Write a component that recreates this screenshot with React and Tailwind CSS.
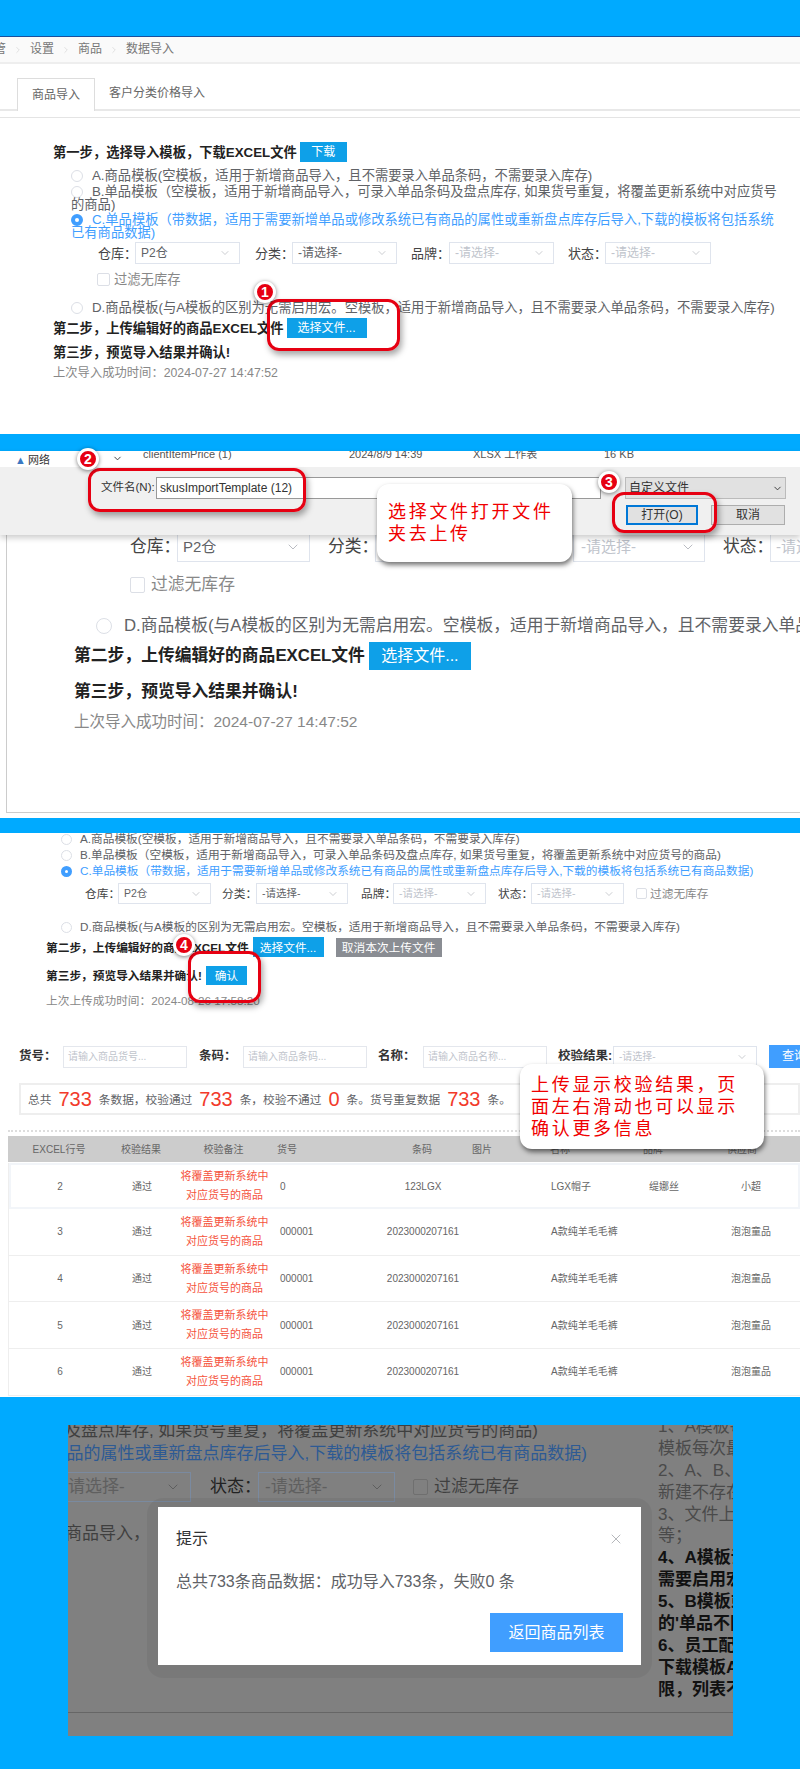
import { ChevronDown, ChevronRight, X } from "lucide-react"

const FONT = "font-['Liberation_Sans','Noto_Sans_CJK_SC',sans-serif]"

function Radio({ checked, className = "" }) {
    return (
        <span
            className={`inline-block shrink-0 rounded-full align-[-2px] bg-white ${className} ${checked ? "border-[4px] border-[#409eff]" : "border border-[#dcdfe6]"}`}
        />
    )
}

function Select({ text, muted, className = "", chevron = 12 }) {
    return (
        <div className={`flex items-center justify-between shrink-0 whitespace-nowrap border border-[#dfe4ed] bg-white pl-[5px] pr-[8px] ${className}`}>
            <span className={muted ? "text-[#c0c4cc]" : "text-[#606266]"}>{text}</span>
            <ChevronDown size={chevron} strokeWidth={1.2} className="text-[#a8abb2]" />
        </div>
    )
}

function Label({ children, className = "" }) {
    return <span className={`shrink-0 whitespace-nowrap ${className}`}>{children}</span>
}

function Badge({ n, className }) {
    return (
        <div className={`absolute z-30 flex h-[22px] w-[22px] items-center justify-center rounded-full border-[3px] border-white bg-[#e60012] text-[14px] font-bold text-white shadow-[0_1px_4px_rgba(0,0,0,0.5)] ${className}`}>
            {n}
        </div>
    )
}

function RedBox({ className }) {
    return <div className={`absolute z-20 rounded-[12px] border-[3px] border-[#e60012] shadow-[2px_4px_6px_rgba(0,0,0,0.35)] ${className}`} />
}

function Callout({ lines, className }) {
    return (
        <div className={`absolute z-20 rounded-[12px] bg-white pl-[11px] shadow-[1px_3px_5px_rgba(0,0,0,0.55)] ${className}`}>
            {lines.map((line) => (
                <div key={line} className="h-[22px] whitespace-nowrap text-[18px] leading-[22px] tracking-[2.7px] text-[#f00000]">
                    {line}
                </div>
            ))}
        </div>
    )
}

function BlueButton({ children, className = "" }) {
    return <div className={`flex shrink-0 items-center justify-center bg-[#0ea0e8] text-white ${className}`}>{children}</div>
}

function PanelOne() {
    return (
        <section className="relative h-[398px] bg-white text-[13.3px] leading-[13px] text-[#606266]">
            <div className="flex h-[28px] items-center gap-[7px] border-t border-b-2 border-t-[#1a4f9c] border-b-[#eeeeee] bg-[#fafafa] text-[12px] text-[#777]">
                <span className="-ml-[6px]">管</span>
                <ChevronRight size={10} strokeWidth={1} className="text-[#bbb]" />
                <span>设置</span>
                <ChevronRight size={10} strokeWidth={1} className="text-[#bbb]" />
                <span>商品</span>
                <ChevronRight size={10} strokeWidth={1} className="text-[#bbb]" />
                <span>数据导入</span>
            </div>
            <div className="flex h-[47px] items-end border-b-2 border-[#e8e8e8] pl-[17px] text-[12px] text-[#666]">
                <div className="-mb-[2px] flex h-[33px] w-[78px] items-center justify-center border border-b-0 border-[#dddddd] bg-white">商品导入</div>
                <div className="flex h-[31px] items-center pl-[14px]">客户分类价格导入</div>
            </div>
            <div className="mt-[6px] border-t border-[#e4e4e4] pl-[53px]">
                <div className="mt-[24px] flex h-[20px] items-center gap-[3px] font-bold text-[#222]">
                    第一步，选择导入模板，下载EXCEL文件
                    <BlueButton className="h-[20px] w-[47px] text-[12px] font-normal">下载</BlueButton>
                </div>
                <div className="ml-[18px] mt-[7px] whitespace-nowrap">
                    <div><Radio className="mr-[9px] h-[12px] w-[12px]" />A.商品模板(空模板，适用于新增商品导入，且不需要录入单品条码，不需要录入库存)</div>
                    <div className="mt-[3px]"><Radio className="mr-[9px] h-[12px] w-[12px]" />B.单品模板（空模板，适用于新增商品导入，可录入单品条码及盘点库存, 如果货号重复，将覆盖更新系统中对应货号<br />的商品)</div>
                    <div className="mt-[2px] text-[#409eff]"><Radio checked className="mr-[9px] h-[12px] w-[12px]" />C.单品模板（带数据，适用于需要新增单品或修改系统已有商品的属性或重新盘点库存后导入,下载的模板将包括系统<br />已有商品数据)</div>
                </div>
                <div className="ml-[45px] mt-[3px] flex h-[22px] items-center text-[13px] text-[#444]">
                    <Label className="w-[37px]">仓库：</Label>
                    <Select text="P2仓" className="h-[22px] w-[105px] text-[12px]" />
                    <Label className="ml-[15px] w-[37px]">分类：</Label>
                    <Select text="-请选择-" className="h-[22px] w-[105px] text-[12px]" />
                    <Label className="ml-[14px] w-[38px]">品牌：</Label>
                    <Select text="-请选择-" muted className="h-[22px] w-[105px] text-[12px]" />
                    <Label className="ml-[14px] w-[37px]">状态：</Label>
                    <Select text="-请选择-" muted className="h-[22px] w-[106px] text-[12px]" />
                </div>
                <div className="ml-[44px] mt-[7px] flex h-[16px] items-center gap-[4px] text-[#888]">
                    <span className="h-[13px] w-[13px] rounded-[2px] border border-[#dcdfe6]" />
                    过滤无库存
                </div>
                <div className="ml-[18px] mt-[14px] whitespace-nowrap">
                    <Radio className="mr-[9px] h-[12px] w-[12px]" />D.商品模板(与A模板的区别为无需启用宏。空模板，适用于新增商品导入，且不需要录入单品条码，不需要录入库存)
                </div>
                <div className="mt-[4px] flex h-[20px] items-center gap-[3px] font-bold text-[#222]">
                    第二步，上传编辑好的商品EXCEL文件
                    <BlueButton className="h-[20px] w-[80px] text-[12px] font-normal">选择文件...</BlueButton>
                </div>
                <div className="mt-[8px] h-[14px] font-bold text-[#222]">第三步，预览导入结果并确认!</div>
                <div className="mt-[7px] text-[12.3px] text-[#888]">上次导入成功时间：2024-07-27 14:47:52</div>
            </div>
            <Badge n="1" className="left-[254px] top-[245px]" />
            <RedBox className="left-[267px] top-[263px] h-[52px] w-[133px]" />
        </section>
    )
}

function PanelTwo() {
    return (
        <section className="relative h-[367px] bg-white text-[16.8px] text-[#606266]">
            <div className="absolute inset-x-0 top-0 z-10 h-[84px] overflow-hidden bg-[#f0f0f0] text-[12px] text-[#333] shadow-[0_3px_6px_rgba(0,0,0,0.2)]">
                <div className="flex h-[16px] bg-white">
                    <div className="flex w-[125px] items-end justify-between pb-[1px] pl-[15px] pr-[2px]">
                        <span className="text-[11px] leading-[12px]"><span className="mr-[2px] text-[#3a78c2]">▲</span>网络</span>
                        <ChevronDown size={11} className="mb-[2px]" />
                    </div>
                    <div className="flex flex-1 items-start pl-[18px] text-[11px] leading-[6px] text-[#555]">
                        <span className="w-[206px]">clientItemPrice (1)</span>
                        <span className="w-[124px]">2024/8/9 14:39</span>
                        <span className="w-[131px]">XLSX 工作表</span>
                        <span>16 KB</span>
                    </div>
                </div>
                <div className="ml-[101px] mt-[10px] flex h-[22px] items-center text-[12px]">
                    <Label className="w-[55px] text-[11.5px]">文件名(N):</Label>
                    <div className="flex h-[22px] w-[445px] items-center border border-[#999] bg-white pl-[3px]">skusImportTemplate (12)</div>
                    <div className="ml-[24px] flex h-[22px] w-[161px] items-center justify-between border border-[#bbb] bg-[#e1e1e1] pl-[3px] pr-[2px]">
                        自定义文件
                        <ChevronDown size={11} />
                    </div>
                </div>
                <div className="ml-[626px] mt-[6px] flex gap-[13px] text-[12px]">
                    <div className="flex h-[20px] w-[72px] items-center justify-center border-2 border-[#0078d7] bg-[#e1e1e1]">打开(O)</div>
                    <div className="flex h-[20px] w-[74px] items-center justify-center border border-[#adadad] bg-[#e1e1e1]">取消</div>
                </div>
            </div>

            <div className="h-[81px]" />
            <div className="ml-[130px] flex h-[30px] items-center whitespace-nowrap text-[#444]">
                <Label className="w-[47px]">仓库：</Label>
                <Select text="P2仓" chevron={16} className="h-[30px] w-[133px] text-[15px]" />
                <Label className="ml-[18px] w-[47px]">分类：</Label>
                <Select text="" className="h-[30px] w-[133px]" />
                <Label className="ml-[18px] w-[47px]">品牌：</Label>
                <Select text="-请选择-" muted chevron={16} className="h-[30px] w-[132px] pl-[7px] text-[15px]" />
                <Label className="ml-[18px] w-[47px]">状态：</Label>
                <Select text="-请选择-" muted className="h-[30px] w-[133px] text-[15px]" />
            </div>
            <div className="ml-[130px] mt-[15px] flex h-[16px] items-center gap-[6px] text-[#888]">
                <span className="h-[16px] w-[15px] rounded-[2px] border border-[#dcdfe6]" />
                过滤无库存
            </div>
            <div className="ml-[96px] mt-[22px] flex h-[22px] items-center whitespace-nowrap">
                <Radio className="mr-[12px] h-[16px] w-[16px]" />D.商品模板(与A模板的区别为无需启用宏。空模板，适用于新增商品导入，且不需要录入单品条码，不需要录入库存)
            </div>
            <div className="ml-[74px] mt-[5px] flex h-[28px] items-center gap-[4px] font-bold text-[#222]">
                第二步，上传编辑好的商品EXCEL文件
                <BlueButton className="h-[28px] w-[102px] text-[16px] font-normal">选择文件...</BlueButton>
            </div>
            <div className="ml-[74px] mt-[11px] h-[22px] font-bold leading-[22px] text-[#222]">第三步，预览导入结果并确认!</div>
            <div className="ml-[74px] mt-[8px] text-[15.5px] leading-[22px] text-[#888]">上次导入成功时间：2024-07-27 14:47:52</div>
            <div className="absolute bottom-[5px] left-[6px] right-0 top-[84px] border-b border-l border-[#cccccc]" />

            <Badge n="2" className="left-[77px] top-[-3px]" />
            <Badge n="3" className="left-[598px] top-[20px]" />
            <RedBox className="left-[88px] top-[17px] h-[44px] w-[218px]" />
            <RedBox className="left-[612px] top-[41px] h-[41px] w-[105px]" />
            <Callout lines={["选择文件打开文件", "夹去上传"]} className="left-[377px] top-[33px] h-[78px] w-[195px] pt-[17px]" />
        </section>
    )
}

const rows = [
    { no: 2, sku: "0", code: "123LGX", name: "LGX帽子", brand: "缇娜丝", supplier: "小超" },
    { no: 3, sku: "000001", code: "2023000207161", name: "A款纯羊毛毛裤", brand: "", supplier: "泡泡童品" },
    { no: 4, sku: "000001", code: "2023000207161", name: "A款纯羊毛毛裤", brand: "", supplier: "泡泡童品" },
    { no: 5, sku: "000001", code: "2023000207161", name: "A款纯羊毛毛裤", brand: "", supplier: "泡泡童品" },
    { no: 6, sku: "000001", code: "2023000207161", name: "A款纯羊毛毛裤", brand: "", supplier: "泡泡童品" },
]

function Num({ children }) {
    return <span className="mx-[7px] text-[20px] text-[#f23a2a]">{children}</span>
}

function PanelThree() {
    const grid = "grid grid-cols-[102px_62px_103px_100px_94px_81px_90px_60px_100px] items-center"
    return (
        <section className="relative h-[564px] bg-white text-[11.7px] leading-[13px] text-[#606266]">
            <div className="ml-[61px] -mt-[1px] whitespace-nowrap">
                <div><Radio className="mr-[8px] h-[11px] w-[11px]" />A.商品模板(空模板，适用于新增商品导入，且不需要录入单品条码，不需要录入库存)</div>
                <div className="mt-[3px]"><Radio className="mr-[8px] h-[11px] w-[11px]" />B.单品模板（空模板，适用于新增商品导入，可录入单品条码及盘点库存, 如果货号重复，将覆盖更新系统中对应货号的商品)</div>
                <div className="mt-[3px] text-[#409eff]"><Radio checked className="mr-[8px] h-[11px] w-[11px]" />C.单品模板（带数据，适用于需要新增单品或修改系统已有商品的属性或重新盘点库存后导入,下载的模板将包括系统已有商品数据)</div>
            </div>
            <div className="ml-[85px] mt-[6px] flex h-[21px] items-center text-[#444]">
                <Label className="w-[33px]">仓库：</Label>
                <Select text="P2仓" className="h-[21px] w-[93px] text-[10.5px]" />
                <Label className="ml-[11px] w-[34px]">分类：</Label>
                <Select text="-请选择-" className="h-[21px] w-[92px] text-[10.5px]" />
                <Label className="ml-[13px] w-[32px]">品牌：</Label>
                <Select text="-请选择-" muted className="h-[21px] w-[93px] text-[10.5px]" />
                <Label className="ml-[12px] w-[33px]">状态：</Label>
                <Select text="-请选择-" muted className="h-[21px] w-[93px] text-[10.5px]" />
                <span className="ml-[12px] h-[11px] w-[11px] rounded-[2px] border border-[#dcdfe6]" />
                <span className="ml-[3px] text-[#888]">过滤无库存</span>
            </div>
            <div className="ml-[61px] mt-[16px] whitespace-nowrap">
                <Radio className="mr-[8px] h-[11px] w-[11px]" />D.商品模板(与A模板的区别为无需启用宏。空模板，适用于新增商品导入，且不需要录入单品条码，不需要录入库存)
            </div>
            <div className="ml-[46px] mt-[4px] flex h-[20px] items-center font-bold text-[#222]">
                第二步，上传编辑好的商品EXCEL文件
                <BlueButton className="ml-[4px] h-[20px] w-[71px] text-[11.7px] font-normal">选择文件...</BlueButton>
                <div className="ml-[12px] flex h-[19px] w-[106px] items-center justify-center bg-[#8a8d93] font-normal text-white">取消本次上传文件</div>
            </div>
            <div className="ml-[46px] mt-[9px] flex h-[19px] items-center gap-[4px] font-bold text-[#222]">
                第三步，预览导入结果并确认!
                <BlueButton className="h-[19px] w-[41px] text-[11.7px] font-normal">确认</BlueButton>
            </div>
            <div className="ml-[46px] mt-[9px] text-[#888]">上次上传成功时间：2024-08-26 17:58:20</div>

            <div className="ml-[19px] mt-[38px] flex h-[23px] items-center whitespace-nowrap text-[12.5px] font-bold text-[#333]">
                <Label className="w-[44px]">货号：</Label>
                <div className="flex h-[22px] w-[124px] shrink-0 items-center border border-[#e4e7ed] pl-[4px] text-[10px] font-normal text-[#c0c4cc]">请输入商品货号...</div>
                <Label className="ml-[12px] w-[44px]">条码：</Label>
                <div className="flex h-[22px] w-[124px] shrink-0 items-center border border-[#e4e7ed] pl-[4px] text-[10px] font-normal text-[#c0c4cc]">请输入商品条码...</div>
                <Label className="ml-[11px] w-[45px]">名称：</Label>
                <div className="flex h-[22px] w-[124px] shrink-0 items-center border border-[#e4e7ed] pl-[4px] text-[10px] font-normal text-[#c0c4cc]">请输入商品名称...</div>
                <Label className="ml-[11px] w-[55px]">校验结果:</Label>
                <Select text="-请选择-" muted className="h-[22px] w-[144px] text-[10px] font-normal" />
                <div className="ml-[12px] flex h-[23px] w-[60px] shrink-0 items-center bg-[#409eff] pl-[13px] text-[12px] font-normal text-white">查询</div>
            </div>
            <div className="ml-[19px] mt-[15px] flex h-[32px] items-center whitespace-nowrap border-2 border-[#eeeeee] pl-[7px]">
                总共<Num>733</Num>条数据，校验通过<Num>733</Num>条，校验不通过<Num>0</Num>条。货号重复数据<Num>733</Num>条。
            </div>
            <div className="ml-[8px] mt-[15px] border-t-2 border-dotted border-[#dddddd]" />
            <div className={`${grid} ml-[8px] mt-[4px] h-[26px] bg-[#cccccc] text-[10px] text-[#666]`}>
                <span className="text-center">EXCEL行号</span>
                <span className="text-center">校验结果</span>
                <span className="text-center">校验备注</span>
                <span className="pl-[2px]">货号</span>
                <span className="text-center">条码</span>
                <span className="pl-[3px]">图片</span>
                <span>名称</span>
                <span className="pl-[3px]">品牌</span>
                <span className="pl-[27px]">供应商</span>
            </div>
            <div className="ml-[8px] border-l border-[#eeeeee] text-[10px] text-[#666]">
                {rows.map((row) => (
                    <div key={row.no} className={`${grid} ${row.no === 2 ? "mt-[1px] h-[46px] shadow-[inset_0_0_0_2px_#f2f5f9]" : "h-[46.7px] border-b border-[#eeeeee]"}`}>
                        <span className="text-center">{row.no}</span>
                        <span className="text-center">通过</span>
                        <span className="text-center text-[11px] leading-[19px] text-[#f5533d]">将覆盖更新系统中<br />对应货号的商品</span>
                        <span className="pl-[4px]">{row.sku}</span>
                        <span className="text-center">{row.code}</span>
                        <span />
                        <span>{row.name}</span>
                        <span className="pl-[8px]">{row.brand}</span>
                        <span className="text-center">{row.supplier}</span>
                    </div>
                ))}
            </div>
            <Badge n="4" className="left-[173px] top-[101px]" />
            <RedBox className="left-[188px] top-[118px] h-[52px] w-[73px]" />
            <Callout lines={["上传显示校验结果，页", "面左右滑动也可以显示", "确认更多信息"]} className="left-[520px] top-[231px] h-[85px] w-[244px] pt-[10px]" />
        </section>
    )
}

function PanelFour() {
    const sideLines = [
        { t: "1、A模板每", b: false },
        { t: "模板每次最", b: false },
        { t: "2、A、B、", b: false },
        { t: "新建不存在", b: false },
        { t: "3、文件上传", b: false },
        { t: "等；", b: false },
        { t: "4、A模板请", b: true },
        { t: "需要启用宏", b: true },
        { t: "5、B模板或", b: true },
        { t: "的'单品不同", b: true },
        { t: "6、员工配置", b: true },
        { t: "下载模板A", b: true },
        { t: "限，列表不", b: true },
    ]
    return (
        <section className="h-[372px] bg-[#00aaff] pt-[28px]">
            <div className="relative ml-[68px] h-[311px] w-[665px] overflow-hidden bg-[#808080] text-[17px] leading-[22px] text-[#3f3f3f]">
                <div className="flex h-[287px] overflow-hidden">
                    <div className="w-[590px] shrink-0 overflow-hidden">
                        <div className="-mt-[5px] flex w-[470px] justify-end whitespace-nowrap">及盘点库存, 如果货号重复，将覆盖更新系统中对应货号的商品)</div>
                        <div className="mt-[1px] flex w-[519px] justify-end whitespace-nowrap text-[#2d5a94]">品的属性或重新盘点库存后导入,下载的模板将包括系统已有商品数据)</div>
                        <div className="mt-[7px] flex h-[30px] items-center">
                            <div className="flex h-[30px] w-[123px] shrink-0 items-center justify-between border-y border-r border-[#7a8aa0] pr-[9px] text-[#5f5f5f]">
                                <span className="whitespace-nowrap">请选择-</span>
                                <ChevronDown size={16} strokeWidth={1.2} className="text-[#555]" />
                            </div>
                            <Label className="ml-[19px] w-[48px] text-[#222]">状态：</Label>
                            <div className="flex h-[30px] w-[137px] shrink-0 items-center justify-between border border-[#7a8aa0] pl-[6px] pr-[9px] text-[#5f5f5f]">
                                <span className="whitespace-nowrap">-请选择-</span>
                                <ChevronDown size={16} strokeWidth={1.2} className="text-[#555]" />
                            </div>
                            <span className="ml-[18px] h-[16px] w-[15px] shrink-0 rounded-[2px] border border-[#6f6f6f]" />
                            <span className="ml-[6px] whitespace-nowrap">过滤无库存</span>
                        </div>
                        <div className="mt-[21px] flex w-[82px] justify-end whitespace-nowrap">增商品导入，</div>
                    </div>
                    <div className="-mt-[9px] min-w-0 flex-1 overflow-hidden">
                        {sideLines.map((line) => (
                            <div key={line.t} className={`h-[21.9px] whitespace-nowrap ${line.b ? "font-bold text-[#111]" : "text-[#4a4a4a]"}`}>
                                {line.t}
                            </div>
                        ))}
                    </div>
                </div>
                <div className="border-t border-[#666]" />

                <div className="absolute left-[79px] top-[73px] h-[180px] w-[505px] rounded-[16px] bg-black/5 px-[11px] pt-[9px]">
                    <div className="h-[158px] bg-white px-[18px] text-[#606266]">
                        <div className="flex h-[62px] items-center justify-between pt-[1px]">
                            <span className="text-[16px] text-[#303133]">提示</span>
                            <X size={16} strokeWidth={1} className="-mr-[1px] text-[#909399]" />
                        </div>
                        <div className="mt-[2px] text-[16px]">总共733条商品数据：成功导入733条，失败0 条</div>
                        <div className="mt-[20px] flex justify-end">
                            <div className="flex h-[39px] w-[133px] items-center justify-center bg-[#409eff] text-[16px] text-white">返回商品列表</div>
                        </div>
                    </div>
                </div>
            </div>
        </section>
    )
}

export default function App() {
    return (
        <div className={`flex h-[1769px] w-[800px] flex-col overflow-hidden bg-[#00aaff] ${FONT}`}>
            <div className="h-[36px] shrink-0" />
            <PanelOne />
            <div className="h-[17px] shrink-0" />
            <PanelTwo />
            <div className="h-[15px] shrink-0" />
            <PanelThree />
            <PanelFour />
        </div>
    )
}
